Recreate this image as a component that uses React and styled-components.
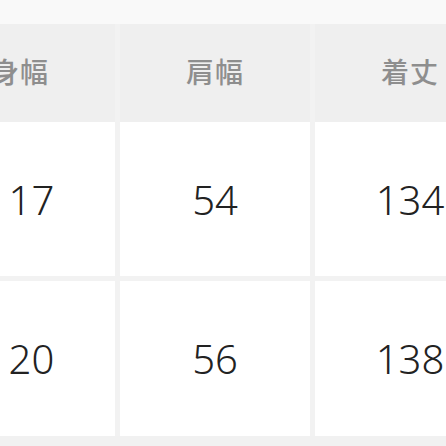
import React from 'react';
import styled, { createGlobalStyle } from 'styled-components';

const GlobalStyle = createGlobalStyle`
	html, body {
		margin: 0;
		padding: 0;
		background-color: #f1f1f1;
	}
	#root {
		width: 446px;
		height: 446px;
		overflow: hidden;
	}
`;

const WrapperStyled = styled.div`
	width: 446px;
	height: 446px;
	overflow: hidden;
	padding-top: 24px;
	box-sizing: border-box;
	background: linear-gradient(#f9f9f9 0, #f9f9f9 24px, #f1f1f1 24px);
`;

const TableStyled = styled.div`
	width: 580px;
	margin-left: -75px;
	display: flex;
	flex-direction: column;
	background-color: #f2f2f2;
`;

const RowStyled = styled.div`
	display: grid;
	grid-template-columns: repeat(3, 190px);
	column-gap: 5px;
	height: ${(p) => p.$height}px;
	margin-top: ${(p) => p.$gap}px;
`;

const HeadCell = styled.div`
	display: flex;
	align-items: center;
	justify-content: center;
	background-color: #efefef;
	color: #8e8e8e;
	font-family: 'Noto Sans CJK JP', sans-serif;
	font-size: 28px;
	font-weight: 500;
	letter-spacing: 1px;
	padding-bottom: 4px;
	box-sizing: border-box;
`;

const Cell = styled.div`
	display: flex;
	align-items: center;
	justify-content: center;
	background-color: #ffffff;
	color: #222222;
	font-family: 'Noto Sans', 'Liberation Sans', sans-serif;
	font-size: 40px;
	font-weight: 300;
	box-sizing: border-box;
`;

const headers = ['身幅', '肩幅', '着丈'];
const rows = [
	['117', '54', '134'],
	['120', '56', '138'],
];

const App = () => {
	return (
		<>
			<GlobalStyle />
			<WrapperStyled>
				<TableStyled>
					<RowStyled $height={98} $gap={0}>
						{headers.map((h) => (
							<HeadCell key={h}>{h}</HeadCell>
						))}
					</RowStyled>
					{rows.map((r, i) => (
						<RowStyled key={i} $height={i === 0 ? 154 : 155} $gap={i === 0 ? 0 : 5}>
							{r.map((v, j) => (
								<Cell key={j}>{v}</Cell>
							))}
						</RowStyled>
					))}
				</TableStyled>
			</WrapperStyled>
		</>
	);
};

export default App;
